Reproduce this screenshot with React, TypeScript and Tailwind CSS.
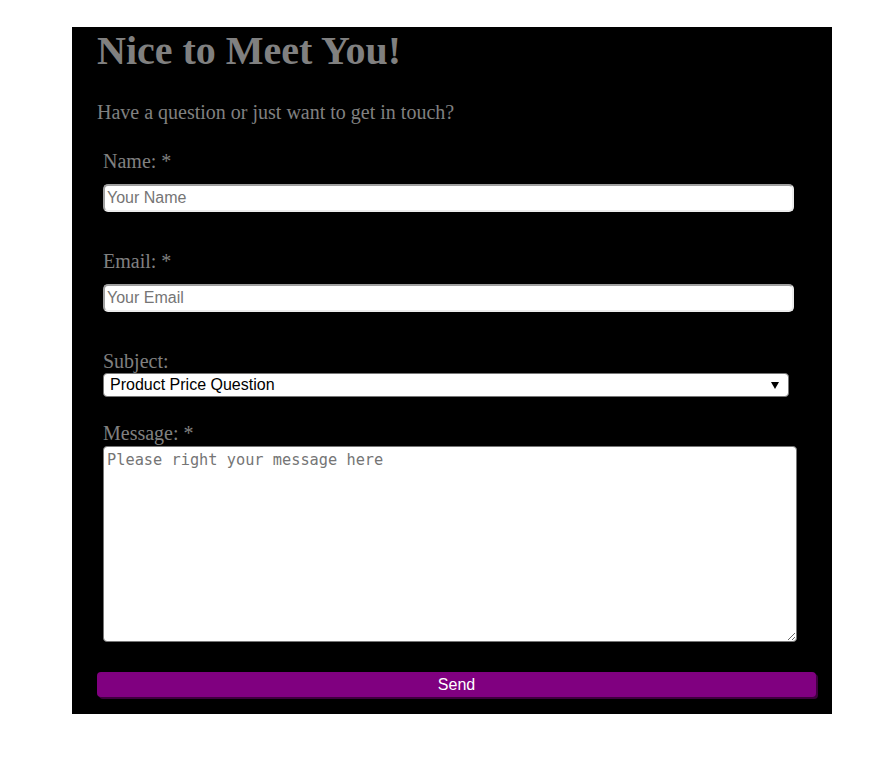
export default function App() {
  return (
    <div className="min-h-screen bg-white pt-[27px] pl-[72px] font-['Liberation_Serif',serif]">
      <div className="w-[760px] h-[687px] bg-black px-[25px] pt-[1px]">
        <h1 className="text-[40px] leading-[46px] font-bold text-[#808080]">Nice to Meet You!</h1>
        <p className="mt-[27px] text-[20px] leading-[23px] text-[#808080]">
          Have a question or just want to get in touch?
        </p>

        <form className="mt-[26px]" onSubmit={(e) => e.preventDefault()}>
          <div className="pl-[6px]">
            <label htmlFor="name" className="block text-[20px] leading-[23px] text-[#808080]">
              Name: *
            </label>
            <input
              id="name"
              type="text"
              placeholder="Your Name"
              className="mt-[11px] block h-[28px] w-[691px] rounded-[5px] border-2 border-t-[#a0a0a0] border-l-[#a0a0a0] border-b-[#ececec] border-r-[#ececec] bg-white px-[2px] font-['Liberation_Sans',sans-serif] text-[16px] text-black placeholder:text-[#757575] outline-none"
            />

            <label htmlFor="email" className="mt-[38px] block text-[20px] leading-[23px] text-[#808080]">
              Email: *
            </label>
            <input
              id="email"
              type="email"
              placeholder="Your Email"
              className="mt-[11px] block h-[28px] w-[691px] rounded-[5px] border-2 border-t-[#a0a0a0] border-l-[#a0a0a0] border-b-[#ececec] border-r-[#ececec] bg-white px-[2px] font-['Liberation_Sans',sans-serif] text-[16px] text-black placeholder:text-[#757575] outline-none"
            />

            <label htmlFor="subject" className="mt-[38px] block text-[20px] leading-[23px] text-[#808080]">
              Subject:
            </label>
            <div className="relative w-[686px]">
              <select
                id="subject"
                defaultValue="price"
                className="block h-[24px] w-full appearance-none rounded-[4px] border border-[#767676] bg-white pl-[6px] font-['Liberation_Sans',sans-serif] text-[16px] leading-[20px] text-black outline-none"
              >
                <option value="price">Product Price Question</option>
                <option value="support">Support</option>
                <option value="other">Other</option>
              </select>
              <svg
                className="pointer-events-none absolute right-[10px] top-[9px]"
                width="8"
                height="7"
                viewBox="0 0 8 7"
              >
                <path d="M0 0 H8 L4 7 Z" fill="#000" />
              </svg>
            </div>

            <label htmlFor="message" className="mt-[25px] block text-[20px] leading-[23px] text-[#808080]">
              Message: *
            </label>
            <textarea
              id="message"
              placeholder="Please right your message here"
              className="mt-[1px] block h-[196px] w-[694px] rounded-[4px] border border-[#767676] bg-white px-[3px] py-[2px] font-['DejaVu_Sans_Mono',monospace] text-[15.3px] text-black placeholder:text-[#757575] outline-none"
            />
          </div>

          <button
            type="submit"
            className="mt-[30px] flex h-[25px] w-[719px] items-center justify-center rounded-[4px] bg-[#800080] font-['Liberation_Sans',sans-serif] text-[16px] text-white shadow-[2px_2px_0_#3d003d]"
          >
            Send
          </button>
        </form>
      </div>
    </div>
  );
}
